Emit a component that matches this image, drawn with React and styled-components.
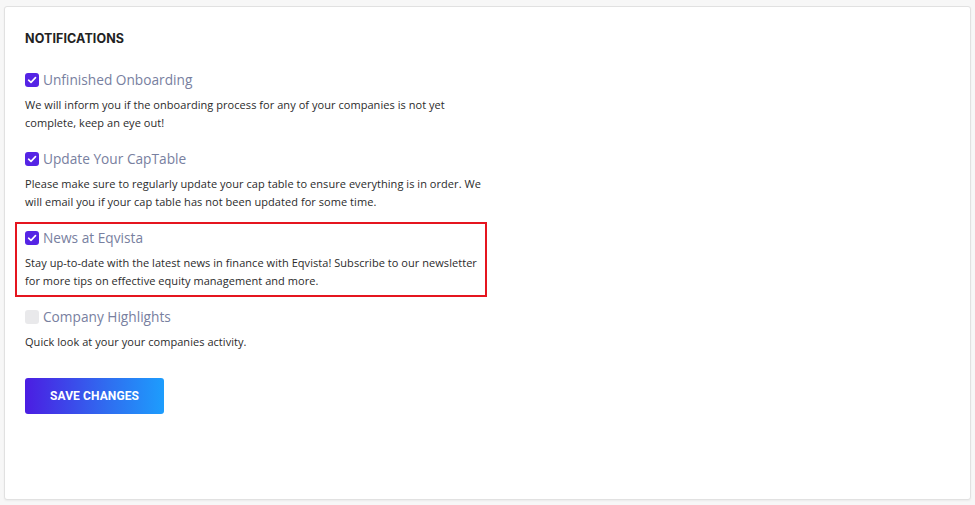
import React, { useState } from "react";
import styled, { createGlobalStyle } from "styled-components";

const Global = createGlobalStyle`
  html, body { margin: 0; padding: 0; background: #f7f7f7; }
  body { font-family: "Open Sans", "Noto Sans", sans-serif; -webkit-font-smoothing: antialiased; }
  * { box-sizing: border-box; }
`;

const Page = styled.div`
  padding: 6px 4px 5px 4px;
  height: 505px;
`;

const Card = styled.section`
  height: 494px;
  background: #ffffff;
  border: 1px solid #e1e1e1;
  border-radius: 3px;
  box-shadow: 0 1px 2px rgba(0, 0, 0, 0.05);
  padding: 22px 20px;
  display: flex;
  flex-direction: column;
`;

const Heading = styled.h2`
  margin: 0 0 15px 0;
  font-family: "Inter", "Open Sans", sans-serif;
  font-size: 12.5px;
  font-weight: 700;
  line-height: 20px;
  color: #222;
  letter-spacing: 0.1px;
`;

const List = styled.div`
  display: flex;
  flex-direction: column;
  gap: 4px;
  margin-left: -10px;
  width: 472px;
`;

const Item = styled.div`
  border: 2px solid ${(p) => (p.$marked ? "#e5151f" : "transparent")};
  padding: 4px 4px 5px 8px;
`;

const Row = styled.label`
  display: flex;
  align-items: center;
  gap: 4px;
  height: 20px;
  cursor: pointer;
`;

const Box = styled.span`
  width: 14px;
  height: 14px;
  border-radius: 3px;
  background: ${(p) => (p.$on ? "#5524e5" : "#e9e9eb")};
  display: inline-flex;
  align-items: center;
  justify-content: center;
  flex: none;
`;

const HiddenInput = styled.input`
  position: absolute;
  opacity: 0;
  width: 0;
  height: 0;
`;

const Title = styled.span`
  font-family: "Open Sans", sans-serif;
  font-size: 13.7px;
  color: #7880a0;
  line-height: 20px;
`;

const Desc = styled.p`
  margin: 6px 0 0 0;
  font-family: "Open Sans", sans-serif;
  font-size: 11px;
  letter-spacing: 0.05px;
  line-height: 18px;
  color: #2b2b2b;
`;

const SaveButton = styled.button`
  margin-top: 20px;
  width: 139px;
  height: 36px;
  border: none;
  border-radius: 3px;
  background: linear-gradient(90deg, #4b1de2 0%, #2f6ef0 60%, #1d9dfd 100%);
  color: #fff;
  font-family: "Roboto", sans-serif;
  font-weight: 700;
  font-size: 12px;
  letter-spacing: 0.1px;
  cursor: pointer;
`;

const Check = () => (
  <svg width="10" height="10" viewBox="0 0 10 10" fill="none">
    <path d="M1.6 5.2 L4 7.4 L8.5 2.6" stroke="#fff" strokeWidth="1.6" strokeLinecap="round" strokeLinejoin="round" />
  </svg>
);

const initial = [
  {
    title: "Unfinished Onboarding",
    text: "We will inform you if the onboarding process for any of your companies is not yet complete, keep an eye out!",
    on: true,
  },
  {
    title: "Update Your CapTable",
    text: "Please make sure to regularly update your cap table to ensure everything is in order. We will email you if your cap table has not been updated for some time.",
    on: true,
  },
  {
    title: "News at Eqvista",
    text: "Stay up-to-date with the latest news in finance with Eqvista! Subscribe to our newsletter for more tips on effective equity management and more.",
    on: true,
    marked: true,
  },
  {
    title: "Company Highlights",
    text: "Quick look at your your companies activity.",
    on: false,
  },
];

export default function App() {
  const [items, setItems] = useState(initial);
  const toggle = (i) =>
    setItems((list) => list.map((it, j) => (j === i ? { ...it, on: !it.on } : it)));

  return (
    <Page>
      <Global />
      <Card>
        <Heading>NOTIFICATIONS</Heading>
        <List>
          {items.map((it, i) => (
            <Item key={it.title} $marked={it.marked}>
              <Row>
                <HiddenInput type="checkbox" checked={it.on} onChange={() => toggle(i)} />
                <Box $on={it.on}>{it.on && <Check />}</Box>
                <Title>{it.title}</Title>
              </Row>
              <Desc>{it.text}</Desc>
            </Item>
          ))}
        </List>
        <SaveButton type="button">SAVE CHANGES</SaveButton>
      </Card>
    </Page>
  );
}
